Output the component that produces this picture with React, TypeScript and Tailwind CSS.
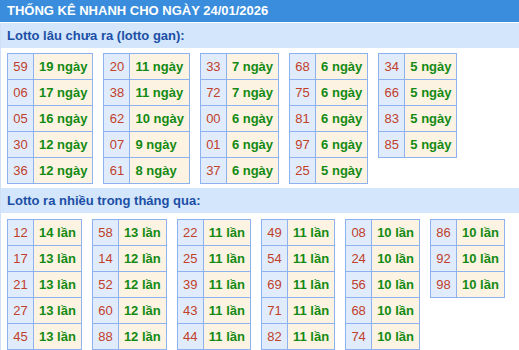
const ganTables: [string, string][][] = [
  [["59", "19"], ["06", "17"], ["05", "16"], ["30", "12"], ["36", "12"]],
  [["20", "11"], ["38", "11"], ["62", "10"], ["07", "9"], ["61", "8"]],
  [["33", "7"], ["72", "7"], ["00", "6"], ["01", "6"], ["37", "6"]],
  [["68", "6"], ["75", "6"], ["81", "6"], ["97", "6"], ["25", "5"]],
  [["34", "5"], ["66", "5"], ["83", "5"], ["85", "5"]],
];

const hotTables: [string, string][][] = [
  [["12", "14"], ["17", "13"], ["21", "13"], ["27", "13"], ["45", "13"]],
  [["58", "13"], ["14", "12"], ["52", "12"], ["60", "12"], ["88", "12"]],
  [["22", "11"], ["25", "11"], ["39", "11"], ["43", "11"], ["44", "11"]],
  [["49", "11"], ["54", "11"], ["69", "11"], ["71", "11"], ["82", "11"]],
  [["08", "10"], ["24", "10"], ["56", "10"], ["68", "10"], ["74", "10"]],
  [["86", "10"], ["92", "10"], ["98", "10"]],
];

function NumTable({ rows, unit }: { rows: [string, string][]; unit: string }) {
  return (
    <div className="grid shrink-0 grid-cols-[26px_auto] auto-rows-[26px] border-l border-t border-[#8eb1ef]">
      {rows.map(([num, count]) => [
        <div
          key={num + "n"}
          className="flex items-center justify-center border-b border-r border-[#8eb1ef] bg-[#e0ecfc] text-[#c0402a]"
        >
          {num}
        </div>,
        <div
          key={num + "c"}
          className="flex items-center whitespace-nowrap border-b border-r border-[#8eb1ef] bg-[#fdf3e2] px-[5px] font-bold text-[#138a13]"
        >
          {count} {unit}
        </div>,
      ])}
    </div>
  );
}

function Heading({ children }: { children: string }) {
  return (
    <div className="flex h-[25px] items-center bg-[#d3e6fb] px-[6px] font-bold text-[#1b4fa6]">
      {children}
    </div>
  );
}

export default function App() {
  return (
    <div className="h-[350px] w-[519px] overflow-hidden bg-white text-[13px] font-['Liberation_Sans',Arial,sans-serif]">
      <div className="flex h-[22px] items-center bg-[#3a8ddd] px-[7px] font-bold text-white">
        THỐNG KÊ NHANH CHO NGÀY 24/01/2026
      </div>
      <div className="mt-px border-b border-l border-[#cfe0f4]">
        <Heading>Lotto lâu chưa ra (lotto gan):</Heading>
        <div className="flex items-start gap-[10px] px-[6px] pb-[4px] pt-[5px]">
          {ganTables.map((rows, i) => (
            <NumTable key={i} rows={rows} unit="ngày" />
          ))}
        </div>
        <Heading>Lotto ra nhiều trong tháng qua:</Heading>
        <div className="flex items-start gap-[10px] px-[6px] pb-[4px] pt-[6px]">
          {hotTables.map((rows, i) => (
            <NumTable key={i} rows={rows} unit="lần" />
          ))}
        </div>
      </div>
    </div>
  );
}
